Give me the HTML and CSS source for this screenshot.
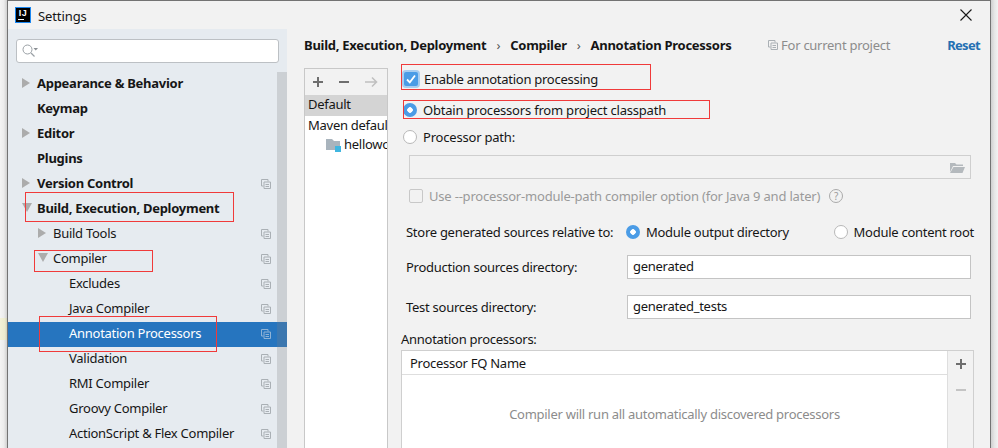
FILE: index.html
```html
<!DOCTYPE html>
<html lang="en">
<head>
<meta charset="utf-8">
<title>Settings</title>
<link rel="stylesheet" href="styles.css">
</head>
<body>
<svg class="defs" width="0" height="0" aria-hidden="true">
  <symbol id="copy" viewBox="0 0 10 10">
    <path d="M.5.5h6.500v2M.5.5v6.500h2" fill="none" stroke="currentColor"/>
    <path d="M3 3h6.500v6.500H3zM4.500 5.500h3.500M4.500 7.500h3.500" fill="none" stroke="currentColor"/>
  </symbol>
  <symbol id="right" viewBox="0 0 8 10"><path d="M0 0l8 5-8 5z" fill="currentColor"/></symbol>
  <symbol id="down" viewBox="0 0 10 9"><path d="M0 0h10L5 9z" fill="currentColor"/></symbol>
</svg>
<div class="screen">
  <div class="shade-left"><div class="note-strip"></div></div>
  <div class="window">
    <header class="titlebar">
      <div class="logo"><span class="logo-text">IJ</span><span class="logo-bar"></span></div>
      <span class="title">Settings</span>
      <svg class="close" width="12" height="12" viewBox="0 0 12 12"><path d="M.5.5l11 11M11.500.5l-11 11" stroke="#1a1a1a" stroke-width="1.100"/></svg>
    </header>
    <div class="main">
      <aside class="sidebar">
        <div class="search">
          <svg width="16" height="14" viewBox="0 0 16 14"><circle cx="5.500" cy="5.500" r="4.500" fill="none" stroke="#9aa0a5"/><path d="M9 9l3.500 3.500" stroke="#9aa0a5" stroke-width="1.200"/><path d="M11.500 4h4.500l-2.250 2.500z" fill="#8a8f94"/></svg>
        </div>
        <nav class="tree">
          <div class="row l0 bold"><svg class="arrow"><use href="#right"/></svg><span>Appearance &amp; Behavior</span></div>
          <div class="row l0 bold"><span class="arrow"></span><span>Keymap</span></div>
          <div class="row l0 bold"><svg class="arrow"><use href="#right"/></svg><span>Editor</span></div>
          <div class="row l0 bold"><span class="arrow"></span><span>Plugins</span></div>
          <div class="row l0 bold"><svg class="arrow"><use href="#right"/></svg><span>Version Control</span><svg class="copy"><use href="#copy"/></svg></div>
          <div class="row l0 bold"><svg class="arrow open"><use href="#down"/></svg><span>Build, Execution, Deployment</span></div>
          <div class="row l1"><svg class="arrow"><use href="#right"/></svg><span>Build Tools</span><svg class="copy"><use href="#copy"/></svg></div>
          <div class="row l1"><svg class="arrow open"><use href="#down"/></svg><span>Compiler</span><svg class="copy"><use href="#copy"/></svg></div>
          <div class="row l2"><span>Excludes</span><svg class="copy"><use href="#copy"/></svg></div>
          <div class="row l2"><span>Java Compiler</span><svg class="copy"><use href="#copy"/></svg></div>
          <div class="row l2 selected"><span>Annotation Processors</span><svg class="copy"><use href="#copy"/></svg></div>
          <div class="row l2"><span>Validation</span><svg class="copy"><use href="#copy"/></svg></div>
          <div class="row l2"><span>RMI Compiler</span><svg class="copy"><use href="#copy"/></svg></div>
          <div class="row l2"><span>Groovy Compiler</span><svg class="copy"><use href="#copy"/></svg></div>
          <div class="row l2"><span>ActionScript &amp; Flex Compiler</span><svg class="copy"><use href="#copy"/></svg></div>
        </nav>
        <div class="scrollbar"></div>
      </aside>
      <section class="content">
        <div class="crumbs">
          <span>Build, Execution, Deployment</span><span class="sep">›</span><span>Compiler</span><span class="sep">›</span><span>Annotation Processors</span>
          <span class="scope"><svg class="copy-sm"><use href="#copy"/></svg>For current project</span>
          <span class="reset">Reset</span>
        </div>
        <div class="panes">
          <div class="profiles">
            <div class="tools">
              <svg width="12" height="12" viewBox="0 0 12 12"><path d="M6 1v10M1 6h10" stroke="#6e6e6e" stroke-width="2"/></svg>
              <svg width="12" height="12" viewBox="0 0 12 12"><path d="M1 6h10" stroke="#6e6e6e" stroke-width="2"/></svg>
              <svg width="14" height="12" viewBox="0 0 14 12"><path d="M1 6h11M8 1.500l4.500 4.500L8 10.500" fill="none" stroke="#c0c0c0" stroke-width="1.600"/></svg>
            </div>
            <div class="profile current">Default</div>
            <div class="profile">Maven default</div>
            <div class="profile nested">
              <svg class="module" width="15" height="14" viewBox="0 0 15 14"><path d="M0 1h6l2 2h6v9H0z" fill="#a9b4bd"/><path d="M9 8h6v6H9z" fill="#40b6e0"/></svg>helloworld
            </div>
          </div>
          <div class="form">
            <label class="check-row"><span class="checkbox"><svg width="10" height="10" viewBox="0 0 10 10"><path d="M1 5.500l2.800 2.800L9 1.500" fill="none" stroke="#fff" stroke-width="1.800"/></svg></span>Enable annotation processing</label>
            <label class="radio-row first"><span class="radio on"></span>Obtain processors from project classpath</label>
            <label class="radio-row"><span class="radio"></span>Processor path:</label>
            <div class="path-field">
              <svg width="15" height="11" viewBox="0 0 15 11"><path d="M0 1h5l1.500 1.500H13v1.500H3L0 10z" fill="#b4b9bd"/><path d="M3.500 5H15l-2.500 6H0z" fill="#b4b9bd"/></svg>
            </div>
            <label class="disabled-row"><span class="checkbox off"></span>Use --processor-module-path compiler option (for Java 9 and later)<span class="help">?</span></label>
            <div class="store-row">
              <span class="store-label">Store generated sources relative to:</span>
              <label class="store-opt"><span class="radio on"></span>Module output directory</label>
              <label class="store-opt end"><span class="radio"></span>Module content root</label>
            </div>
            <div class="dir-row first-dir"><span>Production sources directory:</span><div class="input">generated</div></div>
            <div class="dir-row"><span>Test sources directory:</span><div class="input">generated_tests</div></div>
            <div class="table-label">Annotation processors:</div>
            <div class="table">
              <div class="table-main">
                <div class="table-head">Processor FQ Name</div>
                <div class="table-empty">Compiler will run all automatically discovered processors</div>
              </div>
              <div class="table-tools">
                <svg width="12" height="12" viewBox="0 0 12 12"><path d="M6 1v10M1 6h10" stroke="#6e6e6e" stroke-width="2"/></svg>
                <svg width="12" height="12" viewBox="0 0 12 12"><path d="M1 6h10" stroke="#c4c4c4" stroke-width="2"/></svg>
              </div>
            </div>
          </div>
        </div>
      </section>
    </div>
  </div>
  <div class="shade-right"></div>
</div>
<div class="mark m1"></div>
<div class="mark m2"></div>
<div class="mark m3"></div>
<div class="mark m4"></div>
<div class="mark m5"></div>
</body>
</html>
```
FILE: styles.css
```css
* { box-sizing: border-box; }
html, body { margin: 0; height: 448px; overflow: hidden; }
body { position: relative; background: #f0f0f0; color: #161616; font: 13px/20px "Noto Sans", "Open Sans", sans-serif; letter-spacing: -.27px; }
.defs { position: absolute; }
.screen { display: flex; width: 998px; height: 448px; }
.shade-left { width: 7px; background: linear-gradient(90deg, #f4f4f4, #ececec 55%, #cfcfcf); padding-top: 318px; }
.note-strip { height: 22px; background: linear-gradient(90deg, #f4f2d8, #ecebce 70%, #cfcfb8); }
.shade-right { width: 7px; background: linear-gradient(90deg, #cfcfcf, #e6e6e6 50%, #f2f2f2); }
.window { width: 984px; display: flex; flex-direction: column; background: #f2f2f2; border: 1px solid #737373; border-bottom: 0; }
.titlebar { height: 28px; flex: none; display: flex; align-items: center; padding: 0 18px 0 7px; }
.logo { width: 16px; height: 16px; background: #000; border: 1px solid #1b87f0; position: relative; display: flex; justify-content: center; }
.logo-text { color: #fff; font: 700 9px/10px "Liberation Sans", sans-serif; letter-spacing: .5px; }
.logo-bar { position: absolute; left: 2px; bottom: 2px; width: 6px; height: 1px; background: #fff; }
.title { margin-left: 7px; flex: 1; font-size: 13px; letter-spacing: -.1px; padding-top: 1px; }
.main { flex: 1; display: flex; min-height: 0; }
.sidebar { width: 279px; flex: none; position: relative; background: #e6ebf0; padding-top: 10px; overflow: hidden; }
.search { width: 263px; height: 24px; margin-left: 8px; background: #fff; border: 1px solid #bcc0c4; border-radius: 3px; display: flex; align-items: center; padding-left: 5px; }
.tree { margin-top: 9px; }
.row { height: 25px; display: flex; align-items: center; white-space: nowrap; position: relative; padding-bottom: 4px; }
.l0 { padding-left: 14px; }
.l1 { padding-left: 30px; }
.l2 { padding-left: 61px; }
.bold { font-weight: 700; }
.arrow { width: 8px; height: 10px; margin-right: 7px; flex: none; color: #acacac; }
.arrow.open { width: 10px; height: 9px; margin-right: 5px; }
.copy { position: absolute; left: 253px; top: 7px; width: 10px; height: 10px; color: #aab0b5; }
.selected { background: #2675bf; color: #fff; }
.selected .copy { color: #8fb3d6; }
.scrollbar { position: absolute; left: 269px; top: 43px; bottom: 0; width: 10px; background: rgba(128, 128, 128, .25); }
.content { flex: 1; min-width: 0; }
.crumbs { height: 39px; display: flex; align-items: center; padding: 0 10px 8px 17px; font-weight: 700; white-space: nowrap; }
.sep { margin: 0 10px; font-weight: 400; color: #555; }
.scope { margin-left: auto; font-weight: 400; color: #8c8c8c; display: flex; align-items: center; margin-right: 57px; }
.copy-sm { width: 10px; height: 10px; margin-right: 3px; color: #aab0b5; }
.reset { color: #2470b3; letter-spacing: -.67px; }
.panes { display: flex; padding-left: 17px; height: 380px; }
.profiles { width: 84px; flex: none; background: #fff; border: 1px solid #c8c8c8; border-bottom: 0; overflow: hidden; white-space: nowrap; }
.tools { height: 26px; background: #f2f2f2; display: flex; align-items: center; gap: 14px; padding-left: 7px; }
.profile { height: 20px; padding-left: 3px; line-height: 18px; }
.current { background: #d4d4d4; height: 21px; }
.nested { display: flex; align-items: center; padding: 0 0 2px 21px; gap: 3px; height: 18px; }
.module { flex: none; margin-top: 2px; }
.form { flex: 1; min-width: 0; padding-left: 13px; }
.check-row { height: 22px; display: flex; align-items: center; margin-left: 2px; }
.checkbox { width: 14px; height: 14px; margin-right: 6px; border-radius: 2px; background: #4b9ce6; box-shadow: 0 0 0 2px #a8cdf0; display: flex; align-items: center; justify-content: center; flex: none; margin-left: 1px; }
.checkbox.off { background: #f2f2f2; border: 1px solid #c8c8c8; box-shadow: none; margin-left: 0; }
.radio-row { height: 20px; display: flex; align-items: center; margin: 7px 0 0 2px; letter-spacing: -.2px; }
.radio-row.first { margin-top: 10px; }
.radio { width: 14px; height: 14px; border-radius: 50%; background: #fff; border: 1px solid #b8b8b8; margin-right: 6px; flex: none; }
.radio.on { background: radial-gradient(circle, #fff 0 2.500px, #4b9ce6 3px); border: 0; }
.path-field { height: 24px; width: 562px; margin: 8px 0 0 8px; border: 1px solid #cfcfcf; display: flex; align-items: center; justify-content: flex-end; padding-right: 5px; }
.disabled-row { height: 20px; margin: 7px 0 0 8px; display: flex; align-items: center; color: #9a9a9a; letter-spacing: -.2px; }
.help { width: 14px; height: 14px; border: 1px solid #aaa; border-radius: 50%; margin-left: 9px; font-size: 10px; line-height: 12px; text-align: center; }
.store-row { height: 20px; margin: 16px 0 0 5px; display: flex; align-items: center; white-space: nowrap; }
.store-label { width: 220px; flex: none; }
.store-opt { display: flex; align-items: center; }
.store-opt.end { margin-left: auto; margin-right: 16px; }
.dir-row { display: grid; grid-template-columns: 221px 344px; align-items: center; margin: 16px 0 0 5px; }
.first-dir { margin-top: 13px; }
.input { height: 24px; background: #fff; border: 1px solid #c4c4c4; padding-left: 5px; line-height: 21px; }
.table-label { height: 20px; margin-top: 10px; line-height: 20px; }
.table { width: 573px; height: 110px; margin-top: 1px; display: flex; background: #fff; border: 1px solid #cfcfcf; }
.table-main { flex: 1; }
.table-head { height: 24px; padding-left: 8px; border-bottom: 1px solid #dedede; line-height: 24px; }
.table-empty { text-align: center; color: #8c8c8c; margin-top: 29px; }
.table-tools { width: 26px; background: #f2f2f2; border-left: 1px solid #dedede; display: flex; flex-direction: column; align-items: center; gap: 14px; padding-top: 7px; }
.mark { position: absolute; border: 1px solid #f03a3a; }
.m1 { left: 401px; top: 64px; width: 250px; height: 26px; }
.m2 { left: 403px; top: 100px; width: 307px; height: 19px; }
.m3 { left: 25px; top: 192px; width: 209px; height: 30px; }
.m4 { left: 34px; top: 250px; width: 119px; height: 22px; }
.m5 { left: 39px; top: 316px; width: 178px; height: 36px; }
```
